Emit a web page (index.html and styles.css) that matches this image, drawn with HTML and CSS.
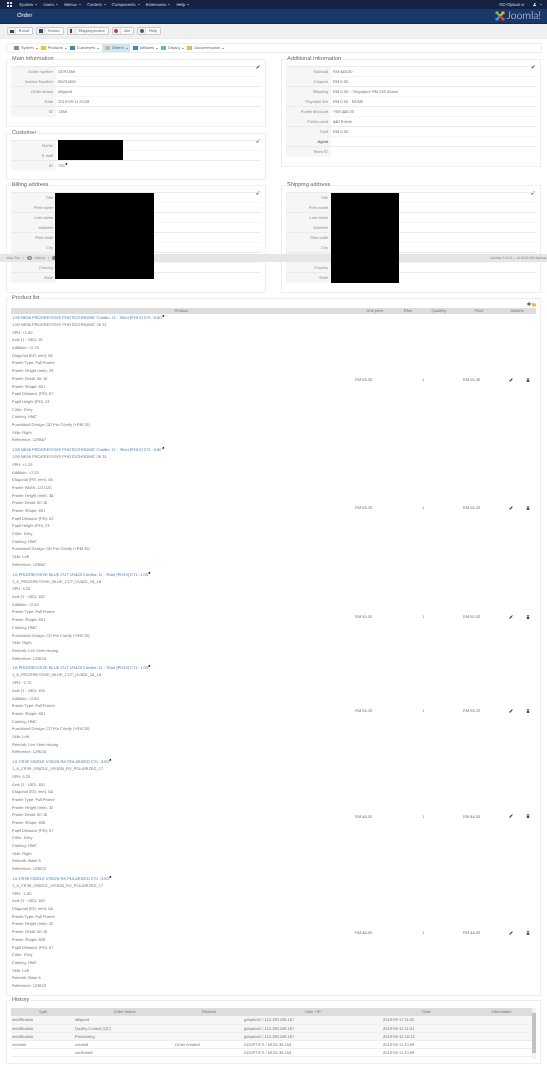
FILE: index.html
```html
<!DOCTYPE html>
<html lang="en">
<head>
<meta charset="UTF-8">
<title>Order</title>
<link rel="stylesheet" href="styles.css">
</head>
<body>

<svg class="icon-defs" width="0" height="0">
    <symbol id="pencil" viewBox="0 0 10 10"><path d="M0.5 9.5 L1.5 6.5 L6.5 1.5 L8.5 3.5 L3.5 8.5 Z M7.2 0.8 L8 0 L10 2 L9.2 2.8 Z"/></symbol>
    <symbol id="trash" viewBox="0 0 10 10"><path d="M1.5 1.5 H3.5 V0.5 H6.5 V1.5 H8.5 V2.8 H1.5 Z M2 3.5 H8 V10 H2 Z"/></symbol>
    <symbol id="ext" viewBox="0 0 10 10"><path d="M1 0 L9 0 L9 8 L6.5 5.5 L2.5 10 L0 7.5 L4.5 3.5 Z"/></symbol>
</svg>

<!-- Top menu -->
<div class="topbar">
    <svg class="top-logo" viewBox="0 0 10 10"><path fill="#d8dde6" d="M0 0 H4 V4 H0 Z M6 0 H10 V4 H6 Z M0 6 H4 V10 H0 Z M6 6 H10 V10 H6 Z"/></svg>
    <ul class="top-menu">
        <li>System <i class="caret"></i></li>
        <li>Users <i class="caret"></i></li>
        <li>Menus <i class="caret"></i></li>
        <li>Content <i class="caret"></i></li>
        <li>Components <i class="caret"></i></li>
        <li>Extensions <i class="caret"></i></li>
        <li>Help <i class="caret"></i></li>
    </ul>
    <div class="top-user">
        <span>GD-Optical sr</span>
        <svg class="user-icon" viewBox="0 0 10 10"><path fill="#d8dde6" d="M3 0 H7 V5 H3 Z M0 6 H10 V10 H0 Z"/></svg>
        <i class="caret"></i>
    </div>
</div>

<div class="header">
    <h1 class="page-title">Order</h1>
    <div class="brand">
        <svg class="brand-mark" viewBox="0 0 20 20">
            <path fill="#7ac143" d="M1 1 H7 V4 L11 8 L8 11 L3 6 H1 Z"/>
            <path fill="#f9a541" d="M19 1 H13 V4 L9 8 L12 11 L17 6 H19 Z"/>
            <path fill="#5091cd" d="M1 19 H7 V16 L11 12 L8 9 L3 14 H1 Z"/>
            <path fill="#f44321" d="M19 19 H13 V16 L9 12 L12 9 L17 14 H19 Z"/>
        </svg>
        <span class="brand-name">Joomla!</span>
    </div>
</div>

<div class="toolbar">
    <button class="tool-btn"><i class="tool-icon"><b class="glyph glyph-mail"></b></i>E-mail</button>
    <button class="tool-btn"><i class="tool-icon"><b class="glyph glyph-doc"></b></i>Invoice</button>
    <button class="tool-btn"><i class="tool-icon"><b class="glyph glyph-ship"></b></i>Shipping invoice</button>
    <button class="tool-btn"><i class="tool-icon"><b class="glyph glyph-red"></b></i>Join</button>
    <button class="tool-btn"><i class="tool-icon"><b class="glyph glyph-help"></b></i>Help</button>
</div>

<div class="submenu">
    <a class="sub-item"><i class="sub-icon si-green"></i>System <i class="caret dark"></i></a>
    <a class="sub-item"><i class="sub-icon si-yellow"></i>Products <i class="caret dark"></i></a>
    <a class="sub-item"><i class="sub-icon si-blue"></i>Customers <i class="caret dark"></i></a>
    <a class="sub-item active"><i class="sub-icon si-tan"></i>Orders <i class="caret dark"></i></a>
    <a class="sub-item"><i class="sub-icon si-blue"></i>Affiliates <i class="caret dark"></i></a>
    <a class="sub-item"><i class="sub-icon si-teal"></i>Display <i class="caret dark"></i></a>
    <a class="sub-item"><i class="sub-icon si-orange"></i>Documentation <i class="caret dark"></i></a>
</div>

<div class="content">
    <div class="columns">
        <div class="col">
            <fieldset class="box">
                <legend>Main Information</legend>
                <svg class="edit"><use href="#pencil"/></svg>
                <table class="info">
                    <tr><th>Order number</th><td>GD91366</td></tr>
                    <tr><th>Invoice Number</th><td>INV91366</td></tr>
                    <tr><th>Order status</th><td>shipped</td></tr>
                    <tr><th>Date</th><td>2019-09-11 20:59</td></tr>
                    <tr><th>ID</th><td>1366</td></tr>
                </table>
            </fieldset>
            <fieldset class="box">
                <legend>Customer</legend>
                <svg class="edit"><use href="#pencil"/></svg>
                <div class="info-wrap">
                    <table class="info">
                        <tr><th>Name</th><td></td></tr>
                        <tr><th>E-mail</th><td></td></tr>
                        <tr><th>ID</th><td>755<svg class="ext"><use href="#ext"/></svg></td></tr>
                    </table>
                    <div class="redact redact-customer"></div>
                </div>
            </fieldset>
        </div>
        <div class="col">
            <fieldset class="box">
                <legend>Additional Information</legend>
                <svg class="edit"><use href="#pencil"/></svg>
                <table class="info">
                    <tr><th>Subtotal</th><td>RM 440.00</td></tr>
                    <tr><th>Coupon</th><td>RM 0.00</td></tr>
                    <tr><th>Shipping</th><td>RM 0.00 – Singapore RM 250 Above</td></tr>
                    <tr><th>Payment fee</th><td>RM 0.00 - NONE</td></tr>
                    <tr><th>Points discount</th><td>-RM 440.00</td></tr>
                    <tr><th>Points used</th><td>440 Points</td></tr>
                    <tr><th>Total</th><td>RM 0.00</td></tr>
                    <tr><th class="strong">Agent</th><td></td></tr>
                    <tr><th>Team ID</th><td></td></tr>
                </table>
            </fieldset>
        </div>
    </div>

    <div class="columns">
        <fieldset class="box">
            <legend>Billing address</legend>
            <svg class="edit"><use href="#pencil"/></svg>
            <div class="info-wrap">
                <table class="info">
                    <tr><th>Title</th><td></td></tr>
                    <tr><th>First name</th><td></td></tr>
                    <tr><th>Last name</th><td></td></tr>
                    <tr><th>Address</th><td></td></tr>
                    <tr><th>Post code</th><td></td></tr>
                    <tr><th>City</th><td></td></tr>
                    <tr><th></th><td></td></tr>
                    <tr><th>Country</th><td></td></tr>
                    <tr><th>State</th><td></td></tr>
                </table>
                <div class="redact redact-billing"></div>
            </div>
        </fieldset>
        <fieldset class="box">
            <legend>Shipping address</legend>
            <svg class="edit"><use href="#pencil"/></svg>
            <div class="info-wrap">
                <table class="info">
                    <tr><th>Title</th><td></td></tr>
                    <tr><th>First name</th><td></td></tr>
                    <tr><th>Last name</th><td></td></tr>
                    <tr><th>Address</th><td></td></tr>
                    <tr><th>Post code</th><td></td></tr>
                    <tr><th>City</th><td></td></tr>
                    <tr><th></th><td></td></tr>
                    <tr><th>Country</th><td></td></tr>
                    <tr><th>State</th><td></td></tr>
                </table>
                <div class="redact redact-shipping"></div>
            </div>
        </fieldset>
    </div>

    <fieldset class="box products">
        <legend>Product list</legend>
        <div class="list-tools">
            <svg class="plus" viewBox="0 0 10 10"><path d="M4 0 H6 V4 H10 V6 H6 V10 H4 V6 H0 V4 H4 Z"/></svg>
            <svg class="folder" viewBox="0 0 10 10"><path fill="#f5b53f" d="M0 1 H4 L5 2.5 H10 V10 H0 Z"/></svg>
        </div>
        <div class="prod-row prod-head">
            <span>Product</span><span>Unit price</span><span>Files</span><span>Quantity</span><span>Price</span><span>Actions</span>
        </div>

        <div class="prod-row">
            <div class="prod-desc">
                <a class="prod-link">1.59 NK56 PROGRESSIVE PHOTOCHROMIC Combo: 11 - Short [FH1S] CYL -0.50<svg class="ext"><use href="#ext"/></svg></a>
                <p>1.59 NK56 PROGRESSIVE PHOTOCHROMIC 26 31</p>
                <p>SPH: +1.50</p><p>Axis (1 - 180): 15</p><p>Addition: +2.75</p><p>Diagonal (ED, mm): 56</p><p>Frame Type: Full Frame</p><p>Frame Height (mm): 29</p><p>Frame Detail: 55-18</p><p>Frame Shape: 801</p><p>Pupil Distance (PD): 57</p><p>Pupil Height (PH): 23</p><p>Color: Grey</p><p>Coating: HMC</p><p>Functional Design: OD For Comfy (+RM 25)</p><p>Side: Right</p><p>Reference: 129847</p>
            </div>
            <span>RM 55.30</span><span></span><span class="qty">1</span><span>RM 55.30</span>
            <span class="actions"><svg><use href="#pencil"/></svg><svg><use href="#trash"/></svg></span>
        </div>

        <div class="prod-row">
            <div class="prod-desc">
                <a class="prod-link">1.59 NK56 PROGRESSIVE PHOTOCHROMIC Combo: 11 - Short [FH1S] CYL -0.50<svg class="ext"><use href="#ext"/></svg></a>
                <p>1.59 NK56 PROGRESSIVE PHOTOCHROMIC 26 31</p>
                <p>SPH: +1.25</p><p>Addition: +2.25</p><p>Diagonal (PD, mm): 56</p><p>Frame Width: 121/120</p><p>Frame Height (mm): 34</p><p>Frame Detail: 50-18</p><p>Frame Shape: 801</p><p>Pupil Distance (PD): 52</p><p>Pupil Height (PH): 23</p><p>Color: Grey</p><p>Coating: HMC</p><p>Functional Design: OD For Comfy (+RM 25)</p><p>Side: Left</p><p>Reference: 129847</p>
            </div>
            <span>RM 55.20</span><span></span><span class="qty">1</span><span>RM 55.20</span>
            <span class="actions"><svg><use href="#pencil"/></svg><svg><use href="#trash"/></svg></span>
        </div>

        <div class="prod-row">
            <div class="prod-desc">
                <a class="prod-link">1.6 PROGRESSIVE BLUE CUT UV420 Combo: 11 - Short [FH1S] CYL -1.00<svg class="ext"><use href="#ext"/></svg></a>
                <p>1_6_PROGRESSIVE_BLUE_CUT_UV420_24_14</p>
                <p>SPH: 3.25</p><p>Axis (1 - 180): 100</p><p>Addition: +2.50</p><p>Frame Type: Full Frame</p><p>Frame Shape: 801</p><p>Coating: HMC</p><p>Functional Design: CD For Comfy (+RM 25)</p><p>Side: Right</p><p>Remark: Lee Seen Huang</p><p>Reference: 129524</p>
            </div>
            <span>RM 55.00</span><span></span><span class="qty">1</span><span>RM 55.00</span>
            <span class="actions"><svg><use href="#pencil"/></svg><svg><use href="#trash"/></svg></span>
        </div>

        <div class="prod-row">
            <div class="prod-desc">
                <a class="prod-link">1.6 PROGRESSIVE BLUE CUT UV420 Combo: 11 - Short [FH1S] CYL -1.00<svg class="ext"><use href="#ext"/></svg></a>
                <p>1_6_PROGRESSIVE_BLUE_CUT_UV420_24_14</p>
                <p>SPH: -2.75</p><p>Axis (1 - 180): 105</p><p>Addition: +2.50</p><p>Frame Type: Full Frame</p><p>Frame Shape: 801</p><p>Coating: HMC</p><p>Functional Design: CD For Comfy (+RM 25)</p><p>Side: Left</p><p>Remark: Lee Seen Huang</p><p>Reference: 129524</p>
            </div>
            <span>RM 55.20</span><span></span><span class="qty">1</span><span>RM 55.20</span>
            <span class="actions"><svg><use href="#pencil"/></svg><svg><use href="#trash"/></svg></span>
        </div>

        <div class="prod-row">
            <div class="prod-desc">
                <a class="prod-link">1.6 CR39 SINGLE VISION RX POLARIZED CYL -3.50<svg class="ext"><use href="#ext"/></svg></a>
                <p>1_6_CR39_SINGLE_VISION_RX_POLARIZED_17</p>
                <p>SPH: 5.25</p><p>Axis (1 - 180): 150</p><p>Diagonal (ED, mm): 54</p><p>Frame Type: Full Frame</p><p>Frame Height (mm): 32</p><p>Frame Detail: 50-18</p><p>Frame Shape: 808</p><p>Pupil Distance (PD): 57</p><p>Color: Grey</p><p>Coating: HMC</p><p>Side: Right</p><p>Remark: Base 6</p><p>Reference: 129820</p>
            </div>
            <span>RM 44.00</span><span></span><span class="qty">1</span><span>RM 44.00</span>
            <span class="actions"><svg><use href="#pencil"/></svg><svg><use href="#trash"/></svg></span>
        </div>

        <div class="prod-row">
            <div class="prod-desc">
                <a class="prod-link">1.6 CR39 SINGLE VISION RX POLARIZED CYL -3.50<svg class="ext"><use href="#ext"/></svg></a>
                <p>1_6_CR39_SINGLE_VISION_RX_POLARIZED_17</p>
                <p>SPH: -1.50</p><p>Axis (1 - 180): 150</p><p>Diagonal (ED, mm): 54</p><p>Frame Type: Full Frame</p><p>Frame Height (mm): 32</p><p>Frame Detail: 50-18</p><p>Frame Shape: 808</p><p>Pupil Distance (PD): 57</p><p>Color: Grey</p><p>Coating: HMC</p><p>Side: Left</p><p>Remark: Base 6</p><p>Reference: 129820</p>
            </div>
            <span>RM 44.00</span><span></span><span class="qty">1</span><span>RM 44.00</span>
            <span class="actions"><svg><use href="#pencil"/></svg><svg><use href="#trash"/></svg></span>
        </div>
    </fieldset>

    <fieldset class="box history">
        <legend>History</legend>
        <div class="hist-frame">
            <div class="hist-table">
                <div class="hist-row hist-head"><span>Type</span><span>Order status</span><span>Reason</span><span>User / IP</span><span>Date</span><span>Information</span></div>
                <div class="hist-row"><span>modification</span><span>shipped</span><span></span><span>gdoptics2 / 113.190.188.167</span><span>2019-09-17 11:02</span><span></span></div>
                <div class="hist-row"><span>modification</span><span>Quality Control (QC)</span><span></span><span>gdoptics2 / 113.190.188.167</span><span>2019-09-13 11:31</span><span></span></div>
                <div class="hist-row"><span>modification</span><span>Processing</span><span></span><span>gdoptics2 / 113.190.188.167</span><span>2019-09-12 10:13</span><span></span></div>
                <div class="hist-row"><span>creation</span><span>created</span><span>Order created</span><span>ADOPTICS / 60.50.36.153</span><span>2019-09-11 20:59</span><span></span></div>
                <div class="hist-row"><span></span><span>confirmed</span><span></span><span>ADOPTICS / 60.50.36.153</span><span>2019-09-11 20:59</span><span></span></div>
            </div>
            <div class="scrollbar"><div class="scroll-thumb"></div></div>
        </div>
    </fieldset>
</div>

<!-- Status bar, stuck over the page in the capture -->
<div class="statusbar">
    <div class="status-left">
        <span>View Site</span><span class="sep">|</span><i class="badge">0</i><span>Visitors</span><span class="sep">|</span><i class="badge"></i>
    </div>
    <div class="status-right">Joomla! 3.9.12 — © 2019 GD-Optical</div>
</div>

</body>
</html>
```
FILE: styles.css
```css
* {
    box-sizing: border-box;
}

body {
    margin: 0;
    background: #fff;
    color: #777;
    font-family: 'Liberation Sans', Arial, sans-serif;
    font-size: 4px;
    text-rendering: geometricPrecision;
    position: relative;
    filter: blur(0.35px);
}

.icon-defs {
    position: absolute;
}

/* Top menu */
.topbar {
    display: flex;
    align-items: center;
    height: 9px;
    background: #14233f;
    color: #d8dde6;
    font-size: 4.2px;
    padding: 0 5px 0 7px;
}

.top-logo {
    width: 5px;
    height: 5px;
    margin-right: 7px;
}

.top-menu {
    display: flex;
    gap: 6px;
    list-style: none;
    margin: 0;
    padding: 0;
}

.top-user {
    display: flex;
    align-items: center;
    gap: 3px;
    margin-left: auto;
}

.user-icon {
    width: 3.5px;
    height: 3.5px;
    margin-left: 5px;
}

.caret {
    display: inline-block;
    width: 0;
    height: 0;
    margin-left: 1px;
    vertical-align: middle;
    border-top: 1px solid #d8dde6;
    border-left: 1px solid transparent;
    border-right: 1px solid transparent;
}

.caret.dark {
    border-top-color: #555;
}

.header {
    display: flex;
    align-items: center;
    justify-content: space-between;
    height: 15px;
    padding: 0 6px 0 17px;
    background: #1a3867;
    border-bottom: 1px solid #14294d;
}

.page-title {
    margin: 0;
    color: #e8edf4;
    font-size: 6px;
    font-weight: normal;
}

.brand {
    display: flex;
    align-items: center;
    gap: 2px;
}

.brand-mark {
    width: 10px;
    height: 10px;
}

.brand-name {
    color: #e4e9f0;
    font-family: Lato, 'Liberation Sans', sans-serif;
    font-size: 10.5px;
    font-weight: 300;
    line-height: 11px;
}

/* Toolbar */
.toolbar {
    display: flex;
    gap: 3px;
    height: 15px;
    padding: 3px 7px;
    background: #f0f0f0;
    border-bottom: 1px solid #e9e9e9;
}

.tool-btn {
    display: flex;
    align-items: center;
    height: 8px;
    padding: 0 3px 0 0;
    background: #fafafa;
    border: 1px solid #ccc;
    border-radius: 1px;
    color: #666;
    font-family: inherit;
    font-size: 3.6px;
}

.tool-icon {
    display: flex;
    align-items: center;
    justify-content: center;
    width: 8px;
    height: 100%;
    margin-right: 3px;
    border-right: 1px solid #ddd;
    background: #f0f0f0;
}

.glyph {
    display: block;
    width: 4px;
    height: 3px;
    background: #444;
}

.glyph-doc {
    height: 4px;
    background: #446;
}

.glyph-ship {
    width: 2px;
    height: 4px;
}

.glyph-red {
    height: 4px;
    border-radius: 50%;
    background: #b53c4a;
}

.glyph-help {
    height: 4px;
    border-radius: 50%;
    background: #555;
}

/* Component submenu */
.submenu {
    display: flex;
    align-items: center;
    gap: 3px;
    width: 536px;
    height: 10px;
    margin: 4px 0 3px 6px;
    padding: 0 7px;
    border: 1px solid #eee;
    color: #666;
    font-size: 3.8px;
}

.sub-item {
    display: flex;
    align-items: center;
    gap: 1px;
    height: 8px;
    white-space: nowrap;
}

.sub-item.active {
    background: #cfe6f5;
    padding: 0 2px 0 3px;
}

.sub-icon {
    width: 5px;
    height: 4px;
    margin-right: 1px;
}

.si-green { background: #6aa56a; }
.si-yellow { background: #f2c02c; }
.si-blue { background: #3f86bd; }
.si-tan { background: #c7c27e; }
.si-teal { background: #6fb8a4; }
.si-orange { background: #e8b765; }

/* Main content */
.content {
    padding: 0 6px;
}

.columns {
    display: grid;
    grid-template-columns: 260px 260px;
    column-gap: 15px;
    margin-bottom: 2px;
}

.col {
    display: flex;
    flex-direction: column;
    gap: 3px;
}

.box {
    position: relative;
    min-width: 0;
    margin: 0;
    padding: 3px 4px 9px;
    border: 1px solid #eee;
}

.box legend {
    margin-left: 0;
    padding: 0 1px;
    color: #666;
    font-size: 5.6px;
    line-height: 7px;
}

.edit {
    position: absolute;
    top: 2px;
    right: 5px;
    width: 4px;
    height: 4px;
    fill: #666;
}

.info-wrap {
    position: relative;
}

.info {
    width: 100%;
    border-collapse: collapse;
    table-layout: fixed;
}

.info tr {
    height: 10px;
}

.info th,
.info td {
    padding: 0;
    border-top: 1px solid #f6f6f6;
    color: #777;
    font-weight: normal;
    line-height: 9px;
    white-space: nowrap;
}

.info tr:nth-child(odd) th,
.info tr:nth-child(odd) td {
    border-top-color: #ebebeb;
}

.info th {
    width: 45px;
    padding-right: 3px;
    background: #f6f6f6;
    color: #8c8c8c;
    text-align: right;
}

.info th.strong {
    color: #444;
}

.info td {
    padding-left: 2px;
}

.ext {
    width: 2.5px;
    height: 2.5px;
    margin-left: 0.5px;
    vertical-align: 1.5px;
    fill: #222;
}

/* Blacked out personal data */
.redact {
    position: absolute;
    z-index: 3;
    background: #000;
}

.redact-customer {
    left: 47px;
    top: 0;
    width: 65px;
    height: 20px;
}

.redact-billing {
    left: 44px;
    top: 1px;
    width: 99px;
    height: 86px;
}

.redact-shipping {
    left: 45px;
    top: 1px;
    width: 68px;
    height: 90px;
}

/* Product list */
.products {
    padding: 6px 4px 3.5px;
    margin-bottom: 1px;
}

.list-tools {
    position: absolute;
    top: 0;
    right: 4px;
    display: flex;
    gap: 1px;
    align-items: center;
}

.plus {
    width: 4px;
    height: 4px;
    fill: #333;
}

.folder {
    width: 4px;
    height: 5px;
}

.prod-row {
    display: grid;
    grid-template-columns: 341px 46px 20px 42px 38px 38px;
    align-items: center;
    padding: 1px 0 2.2px;
}

.prod-row > span {
    padding-left: 3px;
}

.prod-head {
    height: 6.5px;
    padding: 0;
    background: #ddd;
    color: #777;
    text-align: center;
    line-height: 6.5px;
}

.prod-head > span {
    padding-left: 0;
}

.prod-desc {
    padding-left: 1px;
}

.prod-link {
    display: block;
    height: 6px;
    color: #4a7eb0;
    line-height: 6px;
    white-space: nowrap;
}

.prod-desc p {
    margin: 0;
    height: 7.7px;
    line-height: 7.7px;
    white-space: nowrap;
}

.prod-row > .qty {
    padding-left: 4px;
}

.prod-row > .actions {
    display: flex;
    gap: 13px;
    padding-left: 11px;
}

.actions svg {
    width: 4px;
    height: 4px;
    fill: #444;
}

/* History */
.history {
    padding: 4px 4px 4px;
}

.hist-frame {
    display: flex;
    height: 51px;
}

.hist-table {
    flex: 1;
    min-width: 0;
}

.hist-row {
    display: grid;
    grid-template-columns: 63px 100px 69px 139px 88px 62px;
    height: 8.2px;
    line-height: 7.6px;
    border-bottom: 1px solid #eee;
    white-space: nowrap;
}

.hist-row > span {
    padding-left: 1px;
}

.hist-row:nth-child(-n+4) {
    background: #f6f6f6;
}

.hist-head,
.hist-row.hist-head {
    height: 8px;
    background: #ddd;
    border-bottom: 0;
    color: #777;
    text-align: center;
    line-height: 8px;
}

.scrollbar {
    width: 4.5px;
    padding: 5px 0.5px 6px;
    background: #f2f2f2;
}

.scroll-thumb {
    height: 100%;
    background: #c1c1c1;
}

/* Status bar */
.statusbar {
    position: absolute;
    top: 254px;
    left: 0;
    z-index: 2;
    display: flex;
    align-items: center;
    justify-content: space-between;
    width: 100%;
    height: 8px;
    padding: 0 1px 0 6px;
    background: #e6e6e6;
    color: #777;
    font-size: 3.4px;
}

.status-left {
    display: flex;
    align-items: center;
    gap: 2px;
}

.sep {
    margin: 0 1px;
    color: #999;
}

.badge {
    width: 5px;
    height: 4px;
    border-radius: 2px;
    background: #888;
    color: #fff;
    font-style: normal;
    text-align: center;
    line-height: 4px;
}
```
